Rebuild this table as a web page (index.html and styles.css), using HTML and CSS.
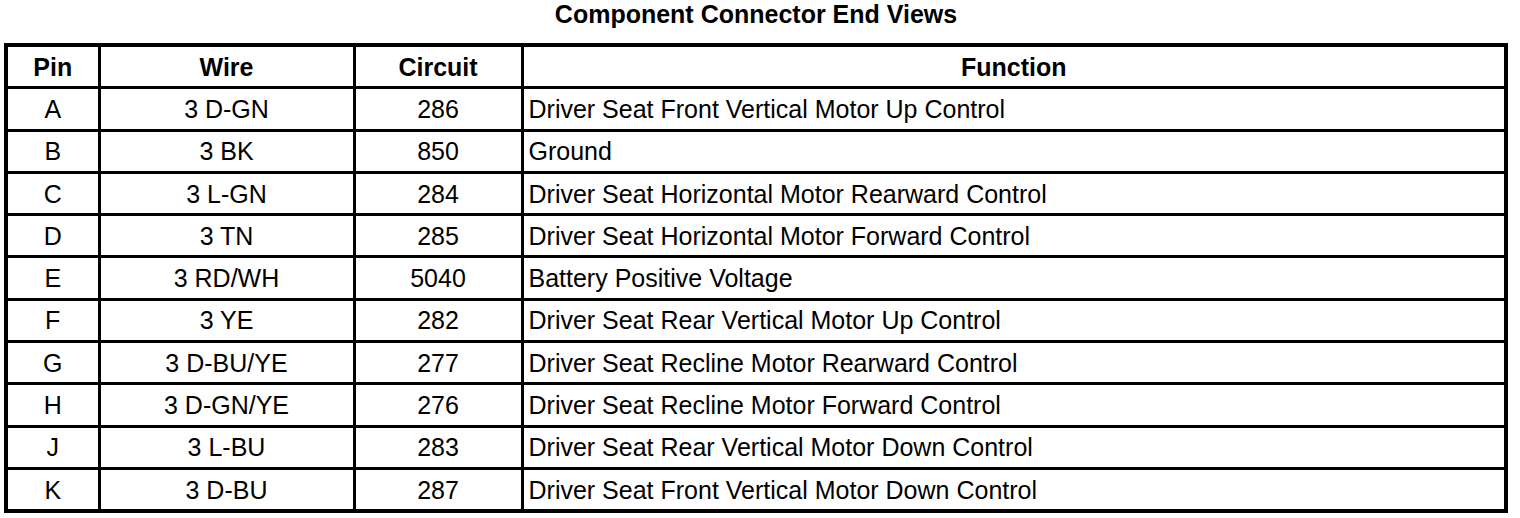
FILE: index.html
```html
<!DOCTYPE html>
<html>
<head>
<meta charset="utf-8">
<link rel="stylesheet" href="styles.css">
</head>
<body>
<div class="page">
  <h1 class="title">Component Connector End Views</h1>
  <table class="pins">
    <colgroup>
      <col class="c-pin"><col class="c-wire"><col class="c-circuit"><col class="c-func">
    </colgroup>
    <thead>
      <tr><th>Pin</th><th>Wire</th><th>Circuit</th><th>Function</th></tr>
    </thead>
    <tbody>
      <tr><td>A</td><td>3 D-GN</td><td>286</td><td class="fn">Driver Seat Front Vertical Motor Up Control</td></tr>
      <tr><td>B</td><td>3 BK</td><td>850</td><td class="fn">Ground</td></tr>
      <tr><td>C</td><td>3 L-GN</td><td>284</td><td class="fn">Driver Seat Horizontal Motor Rearward Control</td></tr>
      <tr><td>D</td><td>3 TN</td><td>285</td><td class="fn">Driver Seat Horizontal Motor Forward Control</td></tr>
      <tr><td>E</td><td>3 RD/WH</td><td>5040</td><td class="fn">Battery Positive Voltage</td></tr>
      <tr><td>F</td><td>3 YE</td><td>282</td><td class="fn">Driver Seat Rear Vertical Motor Up Control</td></tr>
      <tr><td>G</td><td>3 D-BU/YE</td><td>277</td><td class="fn">Driver Seat Recline Motor Rearward Control</td></tr>
      <tr><td>H</td><td>3 D-GN/YE</td><td>276</td><td class="fn">Driver Seat Recline Motor Forward Control</td></tr>
      <tr><td>J</td><td>3 L-BU</td><td>283</td><td class="fn">Driver Seat Rear Vertical Motor Down Control</td></tr>
      <tr><td>K</td><td>3 D-BU</td><td>287</td><td class="fn">Driver Seat Front Vertical Motor Down Control</td></tr>
    </tbody>
  </table>
</div>
</body>
</html>
```
FILE: styles.css
```css
html, body {
  margin: 0;
  padding: 0;
  background: #fff;
}
body {
  font-family: "Liberation Sans", Arial, sans-serif;
  color: #000;
}
.page {
  padding: 0 12px 0 4px;
}
.title {
  margin: 0;
  height: 43px;
  line-height: 29px;
  font-size: 25px;
  font-weight: bold;
  text-align: center;
}
.pins {
  width: 1504px;
  border-collapse: collapse;
  border: 4px solid #000;
  table-layout: fixed;
  font-size: 25px;
}
.c-pin { width: 93px; }
.c-wire { width: 255px; }
.c-circuit { width: 168px; }
.c-func { width: auto; }
.pins th, .pins td {
  border: 3px solid #000;
  height: 39.3px;
  padding: 0;
  text-align: center;
  vertical-align: middle;
  line-height: 28px;
}
.pins th {
  font-weight: bold;
}
.pins td.fn {
  text-align: left;
  padding-left: 5px;
}
```
